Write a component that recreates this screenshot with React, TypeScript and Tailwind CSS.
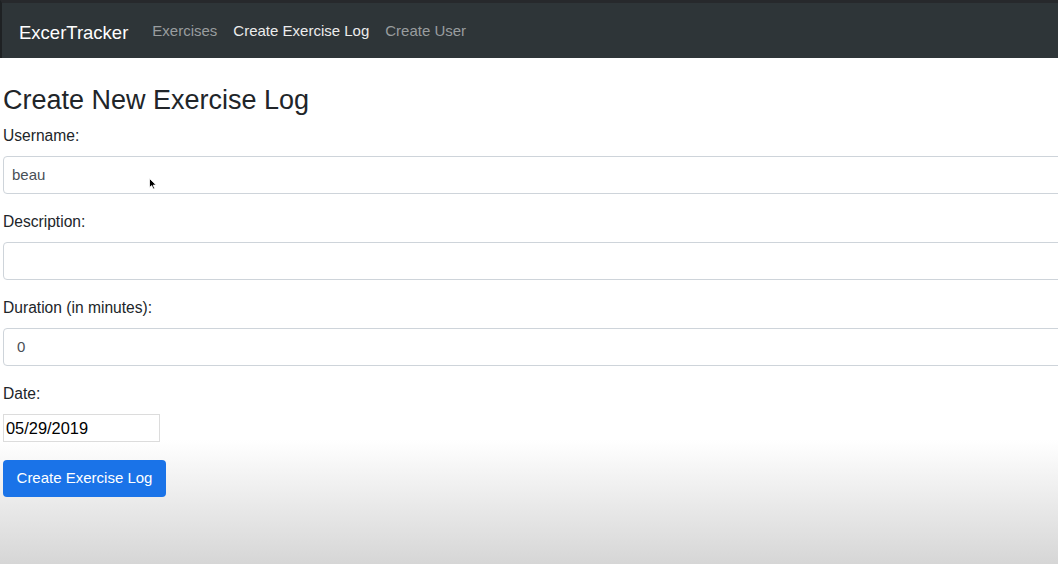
import React from 'react'

const links = [
  { label: 'Exercises', active: false },
  { label: 'Create Exercise Log', active: true },
  { label: 'Create User', active: false },
]

function Field({ label, value, numeric }: { label: string; value: string; numeric?: boolean }) {
  return (
    <div className="mb-[17px]">
      <label className="block text-[15.6px] leading-[22px] text-[#212529] mb-[9px]">{label}</label>
      <div
        className={`h-[38px] w-[1100px] rounded-[4px] border border-[#ced4da] bg-white flex items-center text-[15px] text-[#495057] ${
          numeric ? 'pl-[13px]' : 'pl-[8px]'
        }`}
      >
        {value}
      </div>
    </div>
  )
}

export default function App() {
  return (
    <div className="relative h-[564px] w-full overflow-hidden bg-[linear-gradient(to_bottom,#ffffff_0%,#ffffff_78%,#d6d6d6_100%)] font-['Liberation_Sans',Arial,sans-serif]">
      <nav className="h-[58px] border-t-[3px] border-l-[2px] border-t-[#27292c] border-l-[#1e2123] bg-[#2e3538] flex items-center pl-[17px]">
        <span className="text-[18.5px] text-white mr-[16px] mt-[4px]">ExcerTracker</span>
        {links.map(l => (
          <span
            key={l.label}
            className={`px-[8px] text-[15px] mt-[2px] ${l.active ? 'text-[#ececec]' : 'text-[#999d9f]'}`}
          >
            {l.label}
          </span>
        ))}
      </nav>

      <main className="px-[3px]">
        <h3 className="mt-[26px] mb-[9px] text-[27px] leading-[32px] text-[#212529]">Create New Exercise Log</h3>

        <Field label="Username:" value="beau" />
        <Field label="Description:" value="" />
        <Field label="Duration (in minutes):" value="0" numeric />

        <div>
          <label className="block text-[15.6px] leading-[22px] text-[#212529] mb-[9px]">Date:</label>
          <div className="h-[28px] w-[157px] border border-[#dcdcdc] bg-white flex items-center pl-[2px] text-[16.4px] text-black">
            05/29/2019
          </div>
        </div>

        <button className="mt-[18px] h-[37px] w-[163px] rounded-[4px] bg-[#1a73e8] text-[15px] text-white">
          Create Exercise Log
        </button>
      </main>

      {/* mouse pointer captured in the screenshot */}
      <svg className="absolute left-[149px] top-[178px]" width="8" height="12" viewBox="0 0 8 12">
        <path d="M0.5 0.5 L0.5 9.5 L2.7 7.6 L4.2 11 L5.6 10.4 L4.2 7.1 L7.2 7.1 Z" fill="#000" stroke="#fff" strokeWidth="0.8" />
      </svg>
    </div>
  )
}
